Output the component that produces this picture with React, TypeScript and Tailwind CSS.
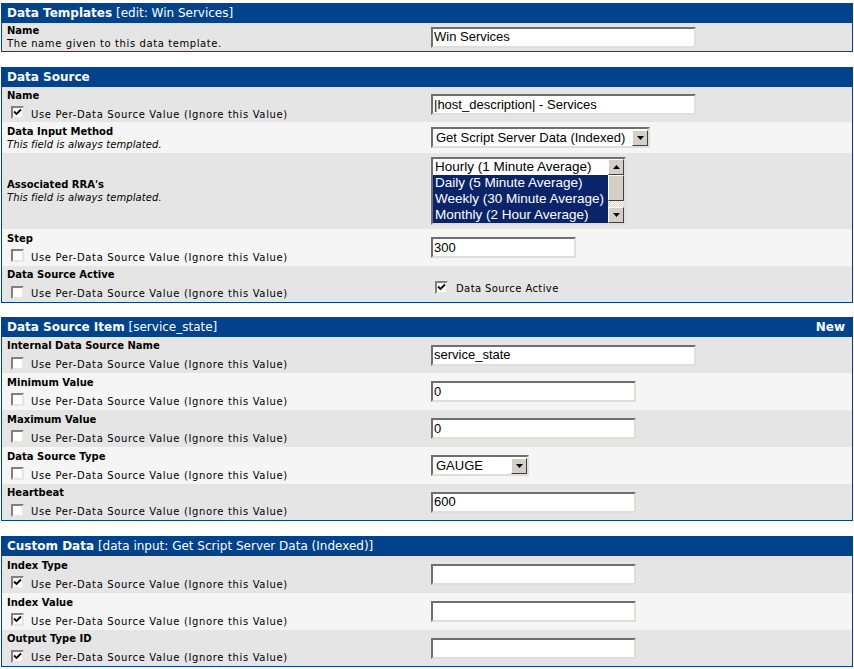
import type { ReactNode } from "react";

const verdana = { fontFamily: '"DejaVu Sans", Verdana, sans-serif' };

function Box({ title, sub, right, children, className = "" }: { title: string; sub?: string; right?: string; children: ReactNode; className?: string }) {
  return (
    <div className={"border border-t-0 border-[#00438C] " + className}>
      <div className="h-[20px] bg-[#00438C] flex items-center justify-between px-[5px] text-white text-[12px]">
        <div>
          <span className="font-bold">{title}</span>
          {sub && <span> {sub}</span>}
        </div>
        {right && <span className="font-bold pr-[2px]">{right}</span>}
      </div>
      {children}
    </div>
  );
}

function Checkbox({ checked }: { checked?: boolean }) {
  return (
    <span className="inline-flex w-[13px] h-[13px] bg-white border-2 border-t-[#808080] border-l-[#808080] border-b-[#e8e6e0] border-r-[#e8e6e0] items-center justify-center shrink-0">
      {checked && (
        <svg width="9" height="9" viewBox="0 0 9 9">
          <path d="M1 3.5 L3.5 6 L8 1.5" stroke="#000" strokeWidth="1.8" fill="none" />
        </svg>
      )}
    </span>
  );
}

function Row({ bg, h, label, desc, italic, check, children }: { bg: "d" | "l"; h: string; label: string; desc?: string; italic?: boolean; check?: boolean; children?: ReactNode }) {
  return (
    <div className={"grid grid-cols-2 " + h + " " + (bg === "d" ? "bg-[#E5E5E5]" : "bg-[#F5F5F5]")}>
      <div className="flex flex-col justify-center pl-[5px] text-[10px] text-black leading-[13px]">
        <div className="font-bold">{label}</div>
        {desc && <div className={italic ? "italic tracking-[0.1px]" : "tracking-[0.6px]"}>{desc}</div>}
        {check !== undefined && (
          <div className="flex items-center gap-[7px] pl-[4px] pt-[3px] tracking-[0.65px]">
            <Checkbox checked={check} />
            <span className="pt-[3px]">Use Per-Data Source Value (Ignore this Value)</span>
          </div>
        )}
      </div>
      <div className="flex items-center pl-[4px]">{children}</div>
    </div>
  );
}

function TextInput({ value, w }: { value: string; w: string }) {
  return (
    <div
      className={"h-[21px] bg-white border-2 border-t-[#6f6f6f] border-l-[#6f6f6f] border-b-[#e0ded8] border-r-[#e0ded8] flex items-center pl-[1px] text-[13px] text-black whitespace-nowrap overflow-hidden " + w}
      style={{ fontFamily: '"Liberation Sans", Arial, sans-serif' }}
    >
      {value}
    </div>
  );
}

function Arrow({ up }: { up?: boolean }) {
  return (
    <svg width="7" height="4" viewBox="0 0 7 4">
      <path d={up ? "M0 4 L3.5 0 L7 4 Z" : "M0 0 L7 0 L3.5 4 Z"} fill="#000" />
    </svg>
  );
}

function ScrollBtn({ up, className = "" }: { up?: boolean; className?: string }) {
  return (
    <div className={"w-[16px] h-[16px] bg-[#D4D0C8] border border-t-white border-l-white border-b-[#404040] border-r-[#404040] flex items-center justify-center " + className}>
      <Arrow up={up} />
    </div>
  );
}

function Select({ value, w }: { value: string; w: string }) {
  return (
    <div
      className={"h-[21px] bg-white border-2 border-t-[#6f6f6f] border-l-[#6f6f6f] border-b-[#e0ded8] border-r-[#e0ded8] flex items-center text-[13px] text-black whitespace-nowrap " + w}
      style={{ fontFamily: '"Liberation Sans", Arial, sans-serif' }}
    >
      <span className="flex-1 pl-[3px]">{value}</span>
      <ScrollBtn />
    </div>
  );
}

function ListBox() {
  const items = ["Hourly (1 Minute Average)", "Daily (5 Minute Average)", "Weekly (30 Minute Average)", "Monthly (2 Hour Average)"];
  return (
    <div
      className="w-[195px] h-[68px] bg-white border-2 border-t-[#6f6f6f] border-l-[#6f6f6f] border-b-[#e0ded8] border-r-[#e0ded8] flex text-[13.5px]"
      style={{ fontFamily: '"Liberation Sans", Arial, sans-serif' }}
    >
      <div className="flex-1 flex flex-col">
        {items.map((it, i) => (
          <div key={it} className={"h-[16px] leading-[16px] pl-[2px] whitespace-nowrap " + (i === 0 ? "text-black" : "bg-[#0A246A] text-white")}>
            {it}
          </div>
        ))}
      </div>
      <div className="w-[16px] flex flex-col bg-[repeating-conic-gradient(#ffffff_0_25%,#d4d0c8_0_50%)] bg-[length:2px_2px]">
        <ScrollBtn up />
        <div className="h-[26px] bg-[#D4D0C8] border border-t-white border-l-white border-b-[#404040] border-r-[#404040]" />
        <div className="flex-1" />
        <ScrollBtn />
      </div>
    </div>
  );
}

export default function App() {
  return (
    <div className="w-[854px] h-[669px] bg-white pt-[3px] px-[1px] overflow-hidden" style={verdana}>
      <Box title="Data Templates" sub="[edit: Win Services]" className="mb-[15px]">
        <Row bg="d" h="h-[28px]" label="Name" desc="The name given to this data template.">
          <TextInput value="Win Services" w="w-[265px]" />
        </Row>
      </Box>

      <Box title="Data Source" className="mb-[14px]">
        <Row bg="d" h="h-[35px]" label="Name" check={true}>
          <TextInput value="|host_description| - Services" w="w-[265px]" />
        </Row>
        <Row bg="l" h="h-[31px]" label="Data Input Method" desc="This field is always templated." italic>
          <Select value="Get Script Server Data (Indexed)" w="w-[219px]" />
        </Row>
        <Row bg="d" h="h-[76px]" label="Associated RRA's" desc="This field is always templated." italic>
          <ListBox />
        </Row>
        <Row bg="l" h="h-[37px]" label="Step" check={false}>
          <TextInput value="300" w="w-[145px]" />
        </Row>
        <Row bg="d" h="h-[36px]" label="Data Source Active" check={false}>
          <div className="flex items-center gap-[8px] pl-[4px] pt-[6px] text-[10px] tracking-[0.4px]">
            <Checkbox checked />
            <span className="pt-[3px]">Data Source Active</span>
          </div>
        </Row>
      </Box>

      <Box title="Data Source Item" sub="[service_state]" right="New" className="mb-[15px]">
        <Row bg="d" h="h-[36px]" label="Internal Data Source Name" check={false}>
          <TextInput value="service_state" w="w-[265px]" />
        </Row>
        <Row bg="l" h="h-[37px]" label="Minimum Value" check={false}>
          <TextInput value="0" w="w-[205px]" />
        </Row>
        <Row bg="d" h="h-[37px]" label="Maximum Value" check={false}>
          <TextInput value="0" w="w-[205px]" />
        </Row>
        <Row bg="l" h="h-[37px]" label="Data Source Type" check={false}>
          <Select value="GAUGE" w="w-[98px]" />
        </Row>
        <Row bg="d" h="h-[36px]" label="Heartbeat" check={false}>
          <TextInput value="600" w="w-[205px]" />
        </Row>
      </Box>

      <Box title="Custom Data" sub="[data input: Get Script Server Data (Indexed)]">
        <Row bg="d" h="h-[37px]" label="Index Type" check={true}>
          <TextInput value="" w="w-[205px]" />
        </Row>
        <Row bg="l" h="h-[37px]" label="Index Value" check={true}>
          <TextInput value="" w="w-[205px]" />
        </Row>
        <Row bg="d" h="h-[36px]" label="Output Type ID" check={true}>
          <TextInput value="" w="w-[205px]" />
        </Row>
      </Box>
    </div>
  );
}
